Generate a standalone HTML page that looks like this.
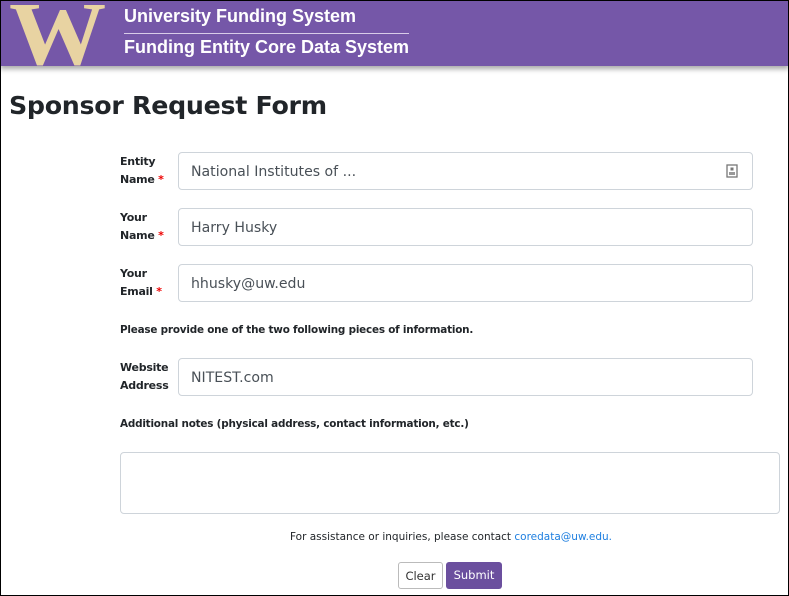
<!DOCTYPE html>
<html><head><meta charset="utf-8"><style>
*{box-sizing:border-box;margin:0;padding:0}
body{width:789px;height:596px;overflow:hidden;background:#fff;font-family:"DejaVu Sans","Liberation Sans",sans-serif;color:#212529;position:relative}
.frame{position:absolute;inset:0;border:1px solid #000;pointer-events:none;z-index:5}
.hdr{position:absolute;left:0;top:0;width:789px;height:66px;background:#7557a8;box-shadow:0 3px 5px rgba(0,0,0,.35);overflow:hidden}
.w{position:absolute;left:9px;top:-10px;font-family:"Liberation Serif",serif;font-weight:bold;font-size:90px;line-height:1;color:#e8d3a2;transform:scaleX(1.08);transform-origin:left}
.t1,.t2{position:absolute;left:124px;color:#fff;font-family:"Liberation Sans",Arial,sans-serif;font-weight:bold;font-size:18px}
.t1{top:6px}.t2{top:37px}
.line{position:absolute;left:124px;top:33px;width:285px;height:1px;background:#d8cce8}
h1{position:absolute;left:9px;top:91px;font-size:25.3px;font-weight:bold;letter-spacing:-0.3px}
.lbl{position:absolute;left:120px;font-size:11px;font-weight:bold;line-height:18px;letter-spacing:-0.25px}
.lbl.s{font-size:10.4px;letter-spacing:-0.2px}
.lbl b{color:#e00;font-weight:bold}
.inp{position:absolute;left:178px;width:575px;height:38px;border:1px solid #ced4da;border-radius:4px;font-size:14.1px;padding:11px 12px 0;color:#495057}
.ta{position:absolute;left:120px;top:452px;width:660px;height:62px;border:1px solid #ced4da;border-radius:4px}
.foot{position:absolute;left:290px;top:531px;font-size:10.5px}
.foot span{color:#1e7fe0}
.btn{position:absolute;top:562px;height:27px;border-radius:3px;font-size:11.5px;text-align:center;line-height:26px}
</style></head><body>
<div class="hdr"><div class="w">W</div><div class="t1">University Funding System</div><div class="line"></div><div class="t2">Funding Entity Core Data System</div></div>
<h1>Sponsor Request Form</h1>
<div class="lbl" style="top:153px">Entity<br>Name <b>*</b></div>
<div class="inp" style="top:152px">National Institutes of ...
<svg style="position:absolute;right:14px;top:11px" width="12" height="14" viewBox="0 0 12 14"><rect x="1" y="1" width="10" height="12" fill="none" stroke="#777" stroke-width="1.3"/><rect x="4.5" y="3.5" width="3" height="3" fill="#777"/><rect x="3" y="8" width="6" height="3" fill="#999"/></svg></div>
<div class="lbl" style="top:209px">Your<br>Name <b>*</b></div>
<div class="inp" style="top:208px">Harry Husky</div>
<div class="lbl" style="top:265px">Your<br>Email <b>*</b></div>
<div class="inp" style="top:264px">hhusky@uw.edu</div>
<div class="lbl s" style="top:321px">Please provide one of the two following pieces of information.</div>
<div class="lbl" style="top:359px">Website<br>Address</div>
<div class="inp" style="top:358px">NITEST.com</div>
<div class="lbl s" style="top:415px">Additional notes (physical address, contact information, etc.)</div>
<div class="ta"></div>
<div class="foot">For assistance or inquiries, please contact <span>coredata@uw.edu.</span></div>
<div class="btn" style="left:398px;width:45px;border:1px solid #bbb;color:#333">Clear</div>
<div class="btn" style="left:446px;width:56px;background:#6b4f9e;color:#fff">Submit</div>
<div class="frame"></div>
</body></html>
